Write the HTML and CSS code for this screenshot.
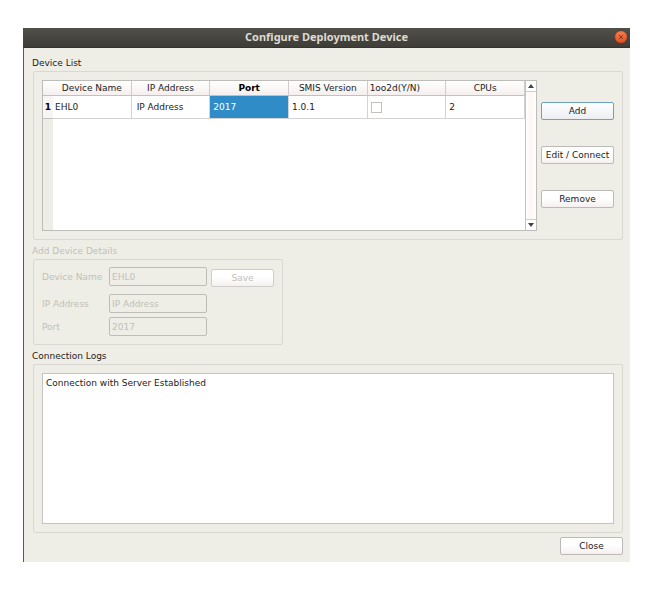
FILE: index.html
```html
<!DOCTYPE html>
<html lang="en">
<head>
<meta charset="utf-8">
<title>Configure Deployment Device</title>
<link rel="stylesheet" href="styles.css">
</head>
<body>
<main class="window">
  <header class="titlebar">
    <h1>Configure Deployment Device</h1>
    <button class="close-icon" type="button" aria-label="Close window">
      <svg viewBox="0 0 14 14" width="14" height="14"><defs><linearGradient id="orange" x2="0" y2="1"><stop stop-color="#f58055"/><stop offset="1" stop-color="#e64d1b"/></linearGradient></defs><circle cx="7" cy="7" r="6.3" fill="url(#orange)" stroke="#653326" stroke-width=".7"/><path d="M5 5l4 4M9 5l-4 4" stroke="#77412c" stroke-width="1"/></svg>
    </button>
  </header>
  <div class="content">
    <section>
      <h2>Device List</h2>
      <div class="group device-list">
        <div class="table-view">
          <div class="table-area">
            <table>
              <colgroup><col class="index"><col span="6"></colgroup>
              <thead>
                <tr><td></td><th>Device Name</th><th>IP Address</th><th class="current">Port</th><th>SMIS Version</th><th class="left">1oo2d(Y/N)</th><th>CPUs</th></tr>
              </thead>
              <tbody>
                <tr><th class="current">1</th><td class="first">EHL0</td><td class="address">IP Address</td><td class="selected">2017</td><td>1.0.1</td><td><input class="check" type="checkbox" aria-label="1oo2d"></td><td>2</td></tr>
              </tbody>
            </table>
          </div>
          <div class="scrollbar">
            <button type="button" aria-label="Scroll up"><svg viewBox="0 0 6 4" width="6" height="4"><path d="M0 4L3 0l3 4z" fill="#444"/></svg></button>
            <button type="button" aria-label="Scroll down"><svg viewBox="0 0 6 4" width="6" height="4"><path d="M0 0L3 4l3-4z" fill="#444"/></svg></button>
          </div>
        </div>
        <div class="actions">
          <button class="button default" type="button">Add</button>
          <button class="button" type="button">Edit / Connect</button>
          <button class="button" type="button">Remove</button>
        </div>
      </div>
    </section>
    <section class="disabled">
      <h2>Add Device Details</h2>
      <form class="group details">
        <div class="fields">
          <label for="name">Device Name</label><input class="text name" id="name" value="EHL0" disabled>
          <label for="address">IP Address</label><input class="text" id="address" value="IP Address" disabled>
          <label for="port">Port</label><input class="text" id="port" value="2017" disabled>
        </div>
        <button class="button save" type="button" disabled>Save</button>
      </form>
    </section>
    <section>
      <h2><label for="logs">Connection Logs</label></h2>
      <div class="group logs">
        <textarea id="logs" readonly>Connection with Server Established</textarea>
      </div>
    </section>
    <footer><button class="button close" type="button">Close</button></footer>
  </div>
</main>
</body>
</html>
```
FILE: styles.css
```css
* { box-sizing: border-box; }
body {
  margin: 0;
  background: #fff;
  color: #222;
  font: 9px/12px "DejaVu Sans", sans-serif;
}
button, input, textarea { font: inherit; color: inherit; margin: 0; }
h1, h2 { margin: 0; font: inherit; }

.window {
  margin: 28px 17px 30px 23px;
  background: #efeee6;
  border-left: 1px solid #2b6699;
}
.titlebar {
  position: relative;
  height: 20px;
  margin-left: -1px;
  background: linear-gradient(#504f49, #3e3d38);
  border-bottom: 1px solid #34332e;
  color: #dfdbd2;
  text-align: center;
}
.titlebar h1 { font: bold 11px/18px "Noto Sans", sans-serif; }
.close-icon {
  position: absolute;
  top: 2px;
  right: 2px;
  width: 14px;
  height: 14px;
  padding: 0;
  border: 0;
  background: none;
}
.close-icon svg { display: block; }

.content { padding: 9px 7px 7px 8px; }
h2 { height: 14px; line-height: 12px; }
section + section { margin-top: 5px; }
.group {
  margin-left: 1px;
  border: 1px solid #d9d8d3;
  border-radius: 2px;
  padding: 8px;
}

.device-list { display: flex; gap: 4px; height: 169px; }
.table-view {
  display: flex;
  flex: 1;
  border: 1px solid #bebcb8;
  background: #fff;
}
.table-area {
  flex: 1;
  background: linear-gradient(90deg, #efeee6 10px, #fff 10px);
}
table { width: 100%; table-layout: fixed; border-collapse: separate; border-spacing: 0; }
.index { width: 10px; }
th, td { padding: 0; font-weight: normal; }
thead th, thead td {
  height: 15px;
  border-right: 1px solid #cfcccb;
  border-bottom: 1px solid #c4c0be;
  background: linear-gradient(#fff, #f5efee);
  line-height: 12px;
}
thead td { border-right: 0; }
thead th.left { text-align: left; padding-left: 2px; }
th.current { font-weight: bold; color: #000; }
tbody th {
  background: #f8f5f4;
  border-bottom: 1px solid #c4c0be;
}
tbody td {
  height: 23px;
  padding-left: 3px;
  border-right: 1px solid #d5d3d1;
  border-bottom: 1px solid #d5d3d1;
}
tbody td.first { padding-left: 2px; }
tbody td.address { padding-left: 5px; }
tbody td.selected { background: #308cc6; color: #fff; }
.check {
  appearance: none;
  display: block;
  width: 11px;
  height: 11px;
  border: 1px solid #c3c1b9;
  background: #fff;
}
.scrollbar {
  display: flex;
  flex-direction: column;
  justify-content: space-between;
  width: 11px;
  border-left: 1px solid #c5c2bf;
  background: linear-gradient(90deg, #fff, #fdf6f4 50%, #fff);
}
.scrollbar button {
  display: flex;
  align-items: center;
  justify-content: center;
  height: 11px;
  padding: 0;
  border: 0;
  border-bottom: 1px solid #cfcccb;
  background: #fff;
}
.scrollbar button:last-child { border-top: 1px solid #cfcccb; border-bottom: 0; }

.actions {
  display: flex;
  flex-direction: column;
  gap: 26px;
  width: 73px;
  padding-top: 22px;
}
.button {
  height: 18px;
  padding: 0;
  border: 1px solid #bcbab6;
  border-radius: 2px;
  background: linear-gradient(#fff, #fff 45%, #f5f0ef);
  line-height: 14px;
  white-space: nowrap;
}
.default { border-color: #6ba3bf; background: linear-gradient(#fff, #eceef2); }

.disabled { color: #c0bfb9; }
.details { display: flex; align-items: flex-start; gap: 4px; width: 250px; height: 86px; padding-top: 7px; }
.fields { display: grid; grid-template-columns: 63px 98px; column-gap: 4px; row-gap: 4px; align-items: center; }
.fields label { white-space: nowrap; }
.text {
  width: 100%;
  height: 19px;
  padding: 0 2px;
  border: 1px solid #bfbdb5;
  border-radius: 2px;
  background: #efeee6;
}
.fields label:first-child, .name { margin-bottom: 4px; }
.save { width: 63px; margin-top: 2px; border-color: #cfcdc9; color: inherit; }

.logs { height: 169px; }
textarea {
  display: block;
  width: 100%;
  height: 100%;
  padding: 3px;
  border: 1px solid #c5c3bf;
  background: #fff;
  resize: none;
}
footer { display: flex; justify-content: flex-end; padding-top: 4px; }
.close { width: 63px; }
```
